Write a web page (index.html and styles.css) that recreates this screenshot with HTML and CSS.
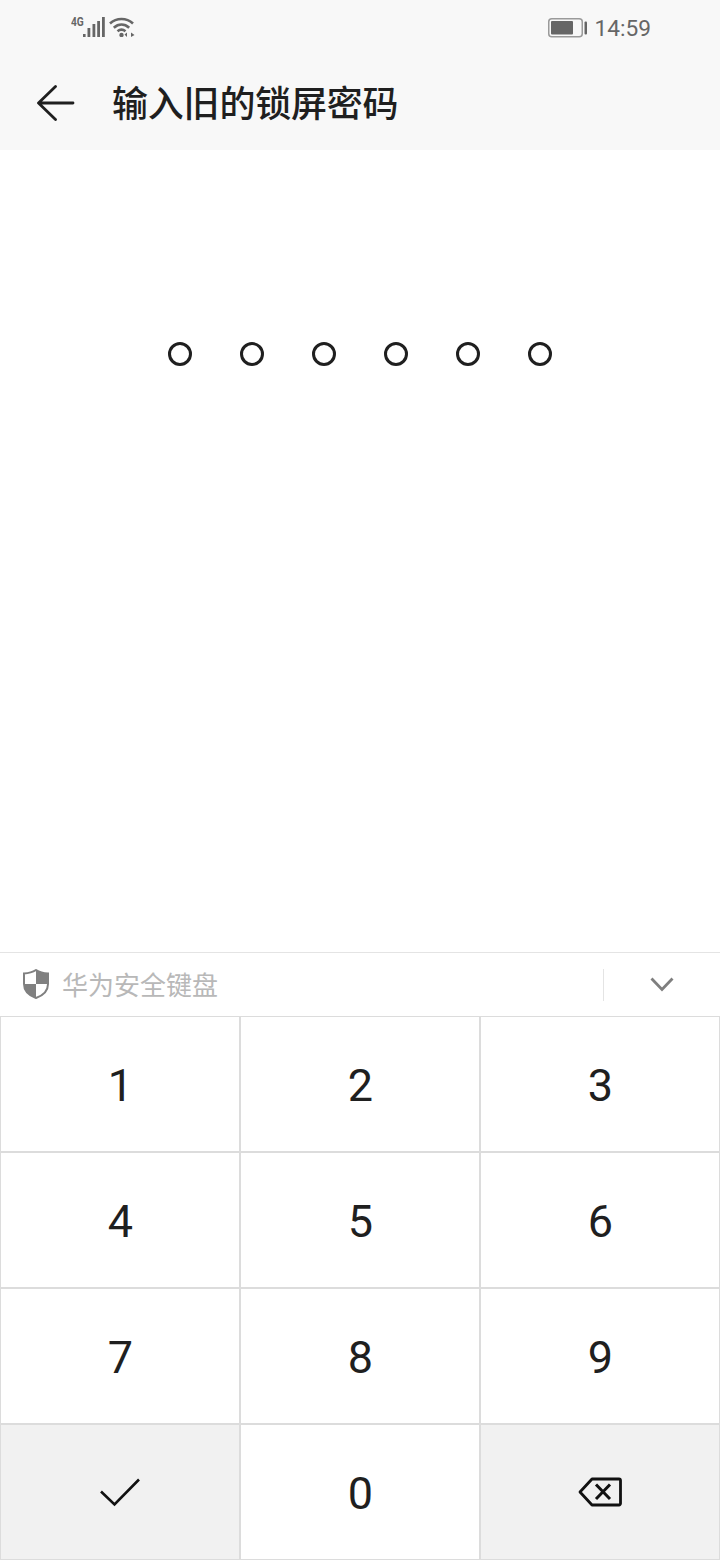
FILE: index.html
```html
<!DOCTYPE html>
<html lang="zh-CN">
<head>
<meta charset="utf-8">
<title>输入旧的锁屏密码</title>
<link rel="stylesheet" href="styles.css">
</head>
<body>
<div class="page">
  <header class="header">
    <div class="status">
      <div class="status-left">
        <span class="net">4G</span>
        <svg class="signal" width="22" height="20" viewBox="0 0 22 20"><path d="M0 17h2.600v3H0zM4.500 11h2.800v9H4.500zM9.500 7h2.800v13H9.500zM14.200 4h2.800v16h-2.800zM19 0h2.800v20H19z"/></svg>
        <svg class="wifi" width="26" height="20" viewBox="0 0 26 20"><g fill="none" stroke-width="2.600"><path d="M1 6.500C7.500 .5 17.500 .5 24 6.500"/><path d="M4.800 10.800C9.500 6.600 15.500 6.600 20.200 10.800"/><path d="M8.500 14.300C11 12.200 14 12.200 16.500 14.300"/></g><circle class="wifi-dot" cx="12.500" cy="18" r="2.200"/><path class="wifi-down" d="M18 15.500v4.500l-2.500-2.500zM22 15.500l3.500 2.500-3.500 2z"/></svg>
      </div>
      <div class="status-right">
        <svg class="battery" width="39" height="20" viewBox="0 0 39 20"><rect x=".75" y=".75" width="33.500" height="18" rx="3" fill="none" stroke="#9a9a9a" stroke-width="1.500"/><rect x="3" y="3" width="22" height="13.500" rx="1" fill="#666"/><rect x="36.500" y="3.500" width="2.500" height="13" rx="1" fill="#666"/></svg>
        <span class="time">14:59</span>
      </div>
    </div>
    <div class="toolbar">
      <svg class="back" width="38" height="38" viewBox="0 0 38 38"><path d="M36 19H2M18.500 2.500L1.500 19l17 16.500" fill="none" stroke="#1f1f1f" stroke-width="2.800" stroke-linecap="round" stroke-linejoin="round"/></svg>
      <h1 class="title">输入旧的锁屏密码</h1>
    </div>
  </header>

  <main class="content">
    <div class="dots">
      <span class="dot"></span><span class="dot"></span><span class="dot"></span><span class="dot"></span><span class="dot"></span><span class="dot"></span>
    </div>
  </main>

  <section class="keyboard">
    <div class="kb-bar">
      <div class="kb-brand">
        <svg class="shield" width="26" height="30" viewBox="0 0 26 30"><path d="M13 1C9.500 3.300 5.500 4.300 1 4.500V15c0 6.500 5 11.500 12 14 7-2.500 12-7.500 12-14V4.500C20.500 4.300 16.500 3.300 13 1z" fill="#fff" stroke="#808080" stroke-width="2"/><path d="M13 1c3.500 2.300 7.500 3.300 12 3.500V15H13zM1 15h12v14C6 26.500 1 21.500 1 15z" fill="#808080"/></svg>
        <span class="kb-label">华为安全键盘</span>
      </div>
      <div class="kb-hide">
        <svg width="24" height="15" viewBox="0 0 24 15"><path d="M1.500 1.500L12 12.500 22.500 1.500" fill="none" stroke="#7f7f7f" stroke-width="2.800"/></svg>
      </div>
    </div>
    <div class="keys">
      <div class="key">1</div>
      <div class="key">2</div>
      <div class="key">3</div>
      <div class="key">4</div>
      <div class="key">5</div>
      <div class="key">6</div>
      <div class="key">7</div>
      <div class="key">8</div>
      <div class="key">9</div>
      <div class="key key-fn">
        <svg class="check" width="42" height="30" viewBox="0 0 42 30"><path d="M2 14.500L15.500 27.500 40 2.500" fill="none" stroke="#111" stroke-width="2.600"/></svg>
      </div>
      <div class="key">0</div>
      <div class="key key-fn">
        <svg class="del" width="44" height="30" viewBox="0 0 44 30"><path d="M14 2H41a1.500 1.500 0 0 1 1.500 1.500v23A1.500 1.500 0 0 1 41 28H14L2 15z" fill="none" stroke="#111" stroke-width="2.800" stroke-linejoin="round"/><path d="M18 7.500L32 22M32 7.500L18 22" fill="none" stroke="#111" stroke-width="3"/></svg>
      </div>
    </div>
  </section>
</div>
</body>
</html>
```

FILE: styles.css
```css
* { box-sizing: border-box; }
html, body { margin: 0; padding: 0; background: #fff; }
.page {
  width: 720px;
  height: 1560px;
  display: flex;
  flex-direction: column;
  overflow: hidden;
  font-family: Roboto, "Noto Sans CJK SC", sans-serif;
  color: #1f1f1f;
}
.header { height: 150px; background: #f8f8f8; flex: none; }
.status {
  height: 56px;
  padding: 17px 69px 0 71px;
  display: flex;
  justify-content: space-between;
  align-items: flex-start;
}
.status-left { display: flex; align-items: flex-start; }
.net {
  font-size: 12px;
  line-height: 10px;
  font-weight: 700;
  color: #666;
  width: 13px;
  white-space: nowrap;
  transform: scaleX(0.85);
  transform-origin: left center;
}
.signal { fill: #666; margin-left: -1px; display: block; }
.wifi { stroke: #666; margin-left: 4px; display: block; }
.wifi-dot, .wifi-down { fill: #666; stroke: none; }
.status-right { display: flex; align-items: center; height: 21px; }
.battery { display: block; }
.time { font-size: 22.700px; line-height: 21px; color: #666; margin-left: 8px; padding-top: 2px; }
.toolbar {
  height: 94px;
  padding-left: 37px;
  display: flex;
  align-items: center;
}
.back { display: block; margin-top: -1px; }
.title {
  margin: -4px 0 0 37px;
  font-family: "Noto Sans CJK SC", sans-serif;
  font-size: 36px;
  line-height: 48px;
  letter-spacing: -0.200px;
  font-weight: 500;
  color: #1f1f1f;
}
.content { flex: 1; padding-top: 192px; }
.dots { display: flex; justify-content: center; gap: 48px; }
.dot {
  width: 24px;
  height: 24px;
  border: 3px solid #1f1f1f;
  border-radius: 50%;
}
.keyboard { flex: none; }
.kb-bar {
  height: 64px;
  border-top: 1px solid #e4e4e4;
  display: flex;
  justify-content: space-between;
  align-items: center;
}
.kb-brand { display: flex; align-items: center; padding-left: 23px; }
.shield { display: block; margin-top: -1px; }
.kb-label {
  font-family: "Noto Sans CJK SC", sans-serif;
  font-size: 26px;
  line-height: 34px;
  color: #b8b8b8;
  margin: -2px 0 0 13px;
}
.kb-hide {
  width: 117px;
  height: 32px;
  border-left: 1px solid #e4e4e4;
  display: flex;
  justify-content: center;
  align-items: center;
}
.keys {
  display: grid;
  grid-template-columns: repeat(3, 240px);
  grid-auto-rows: 136px;
}
.key {
  border: 1px solid #dcdcdc;
  padding: 3px 0 0 1px;
  display: flex;
  justify-content: center;
  align-items: center;
  font-size: 45px;
  color: #1f1f1f;
}
.key-fn { background: #f1f1f1; padding: 0; }
.del { margin-top: -1px; }
```
